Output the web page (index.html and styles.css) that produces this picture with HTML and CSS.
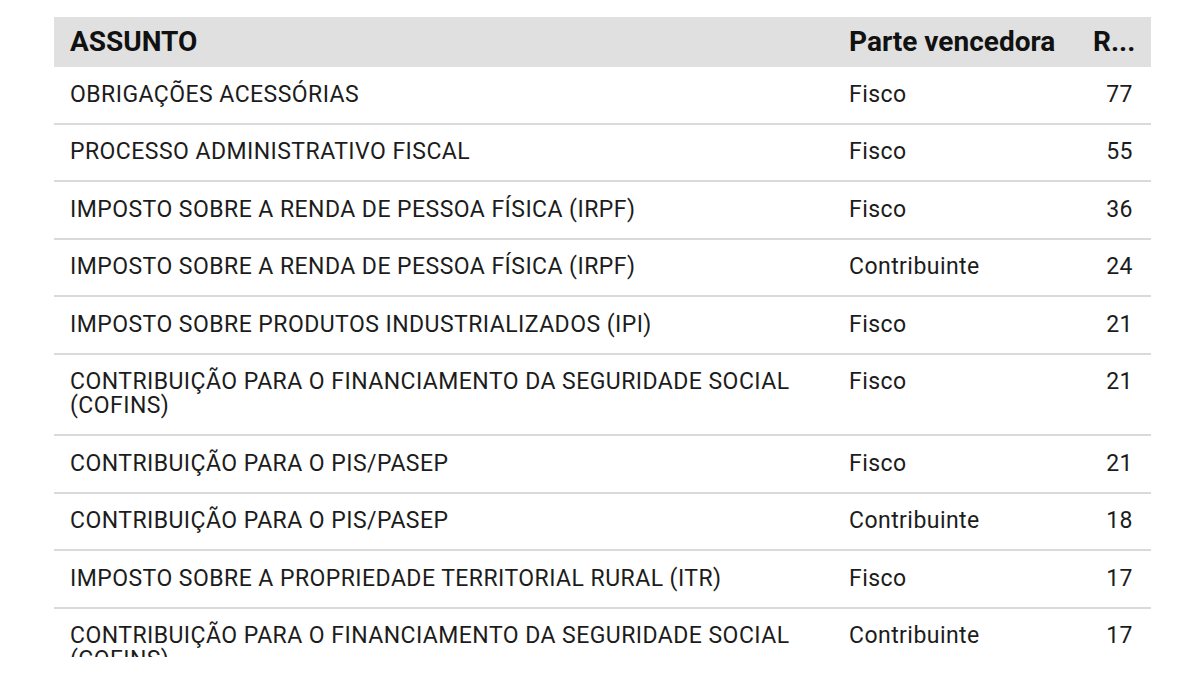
FILE: index.html
```html
<!DOCTYPE html>
<html lang="pt">
<head>
<meta charset="utf-8">
<link rel="stylesheet" href="styles.css">
</head>
<body>
<div class="viewport">
  <div class="table">
    <div class="row head">
      <div class="c1">ASSUNTO</div>
      <div class="c2">Parte vencedora</div>
      <div class="c3">R...</div>
    </div>
    <div class="row"><div class="c1">OBRIGAÇÕES ACESSÓRIAS</div><div class="c2">Fisco</div><div class="c3">77</div></div>
    <div class="row"><div class="c1">PROCESSO ADMINISTRATIVO FISCAL</div><div class="c2">Fisco</div><div class="c3">55</div></div>
    <div class="row"><div class="c1">IMPOSTO SOBRE A RENDA DE PESSOA FÍSICA (IRPF)</div><div class="c2">Fisco</div><div class="c3">36</div></div>
    <div class="row"><div class="c1">IMPOSTO SOBRE A RENDA DE PESSOA FÍSICA (IRPF)</div><div class="c2">Contribuinte</div><div class="c3">24</div></div>
    <div class="row"><div class="c1">IMPOSTO SOBRE PRODUTOS INDUSTRIALIZADOS (IPI)</div><div class="c2">Fisco</div><div class="c3">21</div></div>
    <div class="row"><div class="c1">CONTRIBUIÇÃO PARA O FINANCIAMENTO DA SEGURIDADE SOCIAL (COFINS)</div><div class="c2">Fisco</div><div class="c3">21</div></div>
    <div class="row"><div class="c1">CONTRIBUIÇÃO PARA O PIS/PASEP</div><div class="c2">Fisco</div><div class="c3">21</div></div>
    <div class="row"><div class="c1">CONTRIBUIÇÃO PARA O PIS/PASEP</div><div class="c2">Contribuinte</div><div class="c3">18</div></div>
    <div class="row"><div class="c1">IMPOSTO SOBRE A PROPRIEDADE TERRITORIAL RURAL (ITR)</div><div class="c2">Fisco</div><div class="c3">17</div></div>
    <div class="row"><div class="c1">CONTRIBUIÇÃO PARA O FINANCIAMENTO DA SEGURIDADE SOCIAL (COFINS)</div><div class="c2">Contribuinte</div><div class="c3">17</div></div>
  </div>
</div>
</body>
</html>
```
FILE: styles.css
```css
html, body {
  margin: 0;
  padding: 0;
  background: #ffffff;
}
body {
  font-family: Roboto, "Noto Sans", "Liberation Sans", sans-serif;
  color: #1c1c1c;
}
.viewport {
  margin: 17px 0 0 54px;
  width: 1097px;
  height: 640px;
  overflow: hidden;
}
.table {
  display: flex;
  flex-direction: column;
}
.row {
  display: grid;
  grid-template-columns: 779px 244px 74px;
  border-bottom: 2px solid #dadada;
  font-size: 23px;
  line-height: 24px;
  letter-spacing: 0.45px;
}
.row > div {
  padding: 15.75px 16px;
}
.row .c3 {
  text-align: right;
  padding-right: 18px;
}
.row.head {
  background: #e0e0e0;
  border-bottom: none;
  font-weight: 700;
  font-size: 28px;
  line-height: 34px;
  letter-spacing: 0;
  color: #111111;
}
.row.head > div {
  padding-top: 8px;
  padding-bottom: 8px;
}
.row.head .c3 {
  text-align: left;
  padding-left: 16px;
  padding-right: 0;
  white-space: nowrap;
}
```
